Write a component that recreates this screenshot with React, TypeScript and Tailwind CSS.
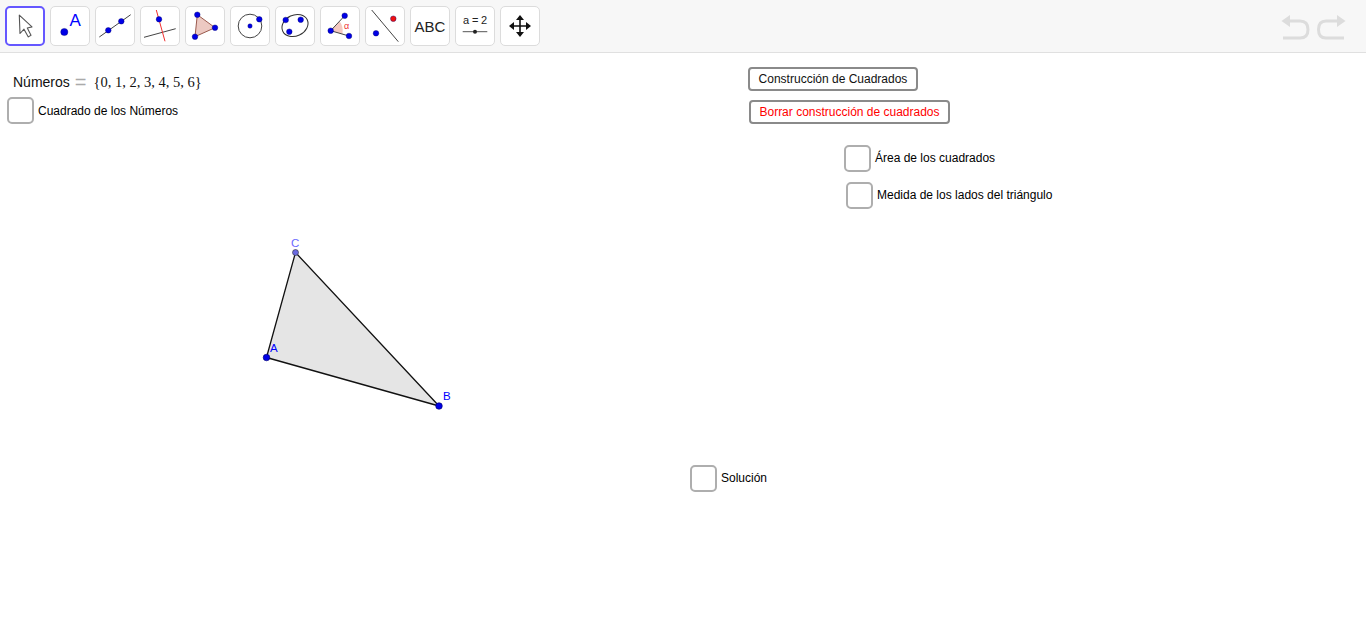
import type { ReactNode } from 'react';

const BLUE = '#0000e6';

function Dot({ x, y, r = 2.8, fill = BLUE }: { x: number; y: number; r?: number; fill?: string }) {
  return <circle cx={x} cy={y} r={r} fill={fill} stroke="#00006a" strokeWidth={0.4} />;
}

const tools: ReactNode[] = [
  <path d="M14.3 9.2 15 27.500l4-4.300 4.300 7.700 2.700-1.700-3.700-7.200 4.700-1.100z" fill="#fff" stroke="#555" strokeWidth={1.1} strokeLinejoin="round" />,
  <>
    <Dot x={14.3} y={26} r={3.6} />
    <text x={19.500} y={19.500} fontSize={17} fill="#0000ff" fontFamily="Liberation Sans, sans-serif">A</text>
  </>,
  <>
    <line x1={4.3} y1={31} x2={35.7} y2={8.7} stroke="#444" strokeWidth={1} />
    <Dot x={13.3} y={24.3} />
    <Dot x={26.3} y={15.3} />
  </>,
  <>
    <line x1={4} y1={31.3} x2={35.7} y2={22.7} stroke="#444" strokeWidth={1} />
    <line x1={16.3} y1={4} x2={25} y2={35.3} stroke="#f03030" strokeWidth={1} />
    <Dot x={19} y={13.3} />
  </>,
  <>
    <path d="M12.3 8.7 30 21.7 10 30.700z" fill="#ecc9c2" stroke="#9a5a4e" strokeWidth={1} />
    <Dot x={12.3} y={8.7} />
    <Dot x={30} y={21.7} />
    <Dot x={10} y={30.7} />
  </>,
  <>
    <circle cx={20} cy={20} r={11.8} fill="none" stroke="#444" strokeWidth={1} />
    <Dot x={20} y={20} r={2.2} />
    <Dot x={29.300} y={13.3} />
  </>,
  <>
    <ellipse cx={20} cy={19.5} rx={13.500} ry={10.500} transform="rotate(-25 20 19.5)" fill="none" stroke="#333" strokeWidth={1} />
    <Dot x={10.7} y={14} />
    <Dot x={25.7} y={13.7} />
    <Dot x={14.3} y={25.7} />
  </>,
  <>
    <path d="M10.7 24.7 19.500 15.300Q23.500 20 22.500 28z" fill="#f4c8c0" />
    <path d="M24.700 9.700 10.700 24.700 29 30" fill="none" stroke="#444" strokeWidth={1} />
    <Dot x={10.7} y={24.7} />
    <Dot x={24.7} y={9.7} />
    <Dot x={29} y={30} />
    <text x={24} y={23} fontSize={9} fill="#f03030" fontFamily="Liberation Sans, sans-serif">α</text>
  </>,
  <>
    <line x1={6.7} y1={4} x2={33.3} y2={35.7} stroke="#444" strokeWidth={1} />
    <Dot x={28.3} y={12.7} fill="#f01010" />
    <Dot x={11} y={27.3} />
  </>,
  <span className="text-[15px] leading-none text-[#222] font-['Liberation_Sans',sans-serif]">ABC</span>,
  <>
    <text x={20} y={18} textAnchor="middle" fontSize={11} fill="#222" fontFamily="Liberation Sans, sans-serif" letterSpacing={-0.2}>a = 2</text>
    <line x1={7.700} y1={25.700} x2={32.300} y2={25.700} stroke="#555" strokeWidth={1} />
    <circle cx={20} cy={25.700} r={2} fill="#222" />
  </>,
  <path d="M20 9 16 14H19.200V19.200H14V16L9 20 14 24V20.800H19.200V26H16L20 31 24 26H20.800V20.800H26V24L31 20 26 16V19.200H20.800V14H24z" fill="#111" />,
];

function ToolButton({ active, children }: { active?: boolean; children: ReactNode }) {
  return (
    <div
      className={
        active
          ? 'w-10 h-10 rounded-[5px] bg-white border-2 border-[#6557ff] flex items-center justify-center'
          : 'w-10 h-10 rounded-[5px] bg-white border border-[#dcdcdc] flex items-center justify-center'
      }
    >
      {children}
    </div>
  );
}

function Tool({ index }: { index: number }) {
  const icon = tools[index];
  if (index === 9) return <ToolButton>{icon}</ToolButton>;
  return (
    <ToolButton active={index === 0}>
      <svg width={40} height={40} viewBox="0 0 40 40" className={index === 0 ? 'shrink-0 -m-0.5' : 'shrink-0 -m-px'}>
        {icon}
      </svg>
    </ToolButton>
  );
}

function CheckRow({ className, labelClass = '-mt-[1px]', label }: { className: string; labelClass?: string; label: string }) {
  return (
    <div className={`absolute flex items-center gap-[4px] ${className}`}>
      <div className="w-[27px] h-[27px] rounded-[5px] bg-white border-2 border-[#aeaeae]" />
      <span className={`text-[12px] leading-[14px] text-black whitespace-nowrap ${labelClass}`}>{label}</span>
    </div>
  );
}

function GgbButton({ className, color, label }: { className: string; color: string; label: string }) {
  return (
    <div
      className={`absolute h-[24px] rounded-[4px] bg-white border-2 border-[#8a8a8a] flex items-center justify-center text-[12px] whitespace-nowrap ${color} ${className}`}
    >
      {label}
    </div>
  );
}

export default function App() {
  return (
    <div className="w-[1366px] h-[631px] overflow-hidden flex flex-col bg-white font-['Liberation_Sans',sans-serif]">
      <div className="h-[53px] shrink-0 bg-[#f7f7f7] border-b border-[#e0e0e0] flex items-start justify-between pt-[6px] pl-[5px]">
        <div className="flex gap-[5px]">
          {tools.map((_, i) => (
            <Tool key={i} index={i} />
          ))}
        </div>
        <svg width={86} height={40} viewBox="1280 6 86 40" className="shrink-0">
          <path d="M1288 21H1300Q1308 21 1308 29.500 1308 38 1300 38H1283" fill="none" stroke="#dcdcdc" strokeWidth={3} />
          <path d="M1281.500 21 1290 15V27z" fill="#dcdcdc" />
          <path d="M1338 21H1326Q1318.500 21 1318.500 29.500 1318.500 38 1326 38H1344" fill="none" stroke="#dcdcdc" strokeWidth={3} />
          <path d="M1345.500 21 1337 15V27z" fill="#dcdcdc" />
        </svg>
      </div>

      {/* graphics view, everything here sits on the free canvas */}
      <div className="relative flex-1">
        <div className="absolute left-[13px] top-[20px] h-[18px] flex items-center text-[14px] leading-[18px] text-[#111] whitespace-nowrap">
          <span>Números</span>
          <span className="ml-[5px] text-[20px] text-[#aaa]">=</span>
          <span className="ml-[7px] font-['Liberation_Serif',serif] text-[14.500px]">{'{0, 1, 2, 3, 4, 5, 6}'}</span>
        </div>

        <CheckRow className="left-[7px] top-[44px]" labelClass="mt-0" label="Cuadrado de los Números" />
        <CheckRow className="left-[844px] top-[92px]" label="Área de los cuadrados" />
        <CheckRow className="left-[846px] top-[129px]" label="Medida de los lados del triángulo" />
        <CheckRow className="left-[690px] top-[412px]" label="Solución" />

        <GgbButton className="left-[748px] top-[14px] w-[170px]" color="text-[#111]" label="Construcción de Cuadrados" />
        <GgbButton className="left-[749px] top-[47px] w-[201px]" color="text-[#ff0000]" label="Borrar construcción de cuadrados" />

        <svg width={220} height={190} viewBox="250 230 220 190" className="absolute left-[250px] top-[177px]">
          <path d="M266.500 357.500 439 406 295.500 252.500z" fill="#e5e5e5" stroke="#111" strokeWidth={1.300} strokeLinejoin="round" />
          <circle cx={266.500} cy={357.500} r={3.300} fill="#0000e6" stroke="#00006a" strokeWidth={0.6} />
          <circle cx={439} cy={406} r={3.300} fill="#0000e6" stroke="#00006a" strokeWidth={0.6} />
          <circle cx={295.500} cy={252.500} r={3} fill="#6a6ae0" stroke="#333" strokeWidth={0.6} />
        </svg>
        <span className="absolute left-[270px] top-[288px] text-[11.5px] leading-[14px] text-[#0000ff]">A</span>
        <span className="absolute left-[443px] top-[336px] text-[11.5px] leading-[14px] text-[#0000ff]">B</span>
        <span className="absolute left-[291px] top-[183px] text-[11.5px] leading-[14px] text-[#6a6aff]">C</span>
      </div>
    </div>
  );
}
